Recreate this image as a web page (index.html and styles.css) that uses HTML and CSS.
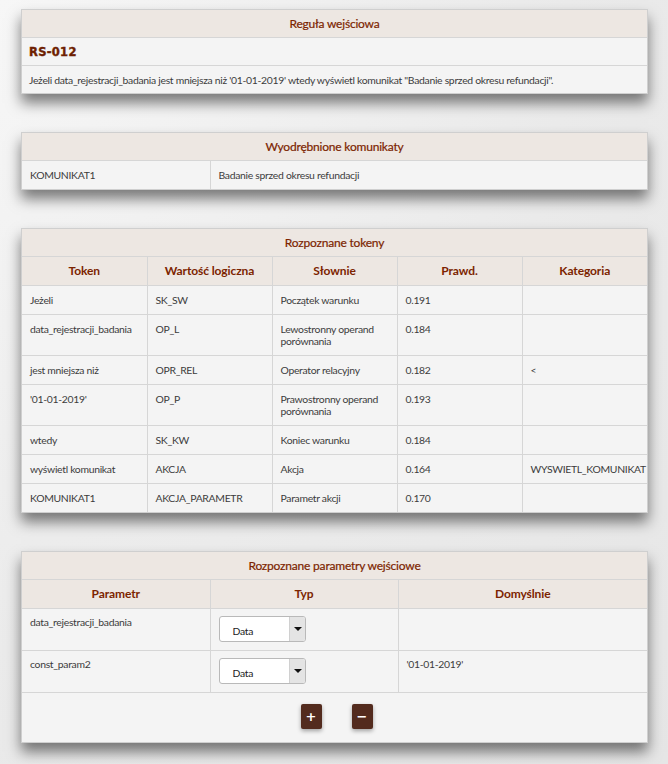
FILE: index.html
```html
<!DOCTYPE html>
<html lang="pl">
<head>
<meta charset="utf-8">
<title>Reguła wejściowa</title>
<link rel="stylesheet" href="styles.css">
</head>
<body>
<div class="page">
  <section class="panel">
    <table class="grid">
      <tr><th class="title">Reguła wejściowa</th></tr>
      <tr><td class="code">RS-012</td></tr>
      <tr><td class="rule">Jeżeli data_rejestracji_badania jest mniejsza niż '01-01-2019' wtedy wyświetl komunikat "Badanie sprzed okresu refundacji".</td></tr>
    </table>
  </section>

  <section class="panel">
    <table class="grid">
      <colgroup><col class="c188"><col></colgroup>
      <tr><th class="title" colspan="2">Wyodrębnione komunikaty</th></tr>
      <tr><td>KOMUNIKAT1</td><td>Badanie sprzed okresu refundacji</td></tr>
    </table>
  </section>

  <section class="panel">
    <table class="grid tokens">
      <colgroup><col><col><col><col><col></colgroup>
      <tr><th class="title" colspan="5">Rozpoznane tokeny</th></tr>
      <tr class="head"><th>Token</th><th>Wartość logiczna</th><th>Słownie</th><th>Prawd.</th><th>Kategoria</th></tr>
      <tr><td>Jeżeli</td><td>SK_SW</td><td>Początek warunku</td><td>0.191</td><td></td></tr>
      <tr><td>data_rejestracji_badania</td><td>OP_L</td><td>Lewostronny operand porównania</td><td>0.184</td><td></td></tr>
      <tr><td>jest mniejsza niż</td><td>OPR_REL</td><td>Operator relacyjny</td><td>0.182</td><td>&lt;</td></tr>
      <tr><td>'01-01-2019'</td><td>OP_P</td><td>Prawostronny operand porównania</td><td>0.193</td><td></td></tr>
      <tr><td>wtedy</td><td>SK_KW</td><td>Koniec warunku</td><td>0.184</td><td></td></tr>
      <tr><td>wyświetl komunikat</td><td>AKCJA</td><td>Akcja</td><td>0.164</td><td>WYSWIETL_KOMUNIKAT</td></tr>
      <tr><td>KOMUNIKAT1</td><td>AKCJA_PARAMETR</td><td>Parametr akcji</td><td>0.170</td><td></td></tr>
    </table>
  </section>

  <section class="panel">
    <table class="grid params">
      <colgroup><col class="c188"><col class="c188"><col></colgroup>
      <tr><th class="title" colspan="3">Rozpoznane parametry wejściowe</th></tr>
      <tr class="head"><th>Parametr</th><th>Typ</th><th>Domyślnie</th></tr>
      <tr>
        <td>data_rejestracji_badania</td>
        <td><div class="select"><span class="val">Data</span><span class="arrow"></span></div></td>
        <td></td>
      </tr>
      <tr>
        <td>const_param2</td>
        <td><div class="select"><span class="val">Data</span><span class="arrow"></span></div></td>
        <td>'01-01-2019'</td>
      </tr>
    </table>
    <div class="actions">
      <button class="btn" type="button">+</button>
      <button class="btn" type="button">−</button>
    </div>
  </section>
</div>
</body>
</html>
```

FILE: styles.css
```css
html, body {
  margin: 0;
  padding: 0;
}
body {
  background: radial-gradient(ellipse at 0% 0%, #f7f7f7 0%, #ebebeb 60%, #e6e6e6 100%);
  min-height: 764px;
  font-family: "Lato", "Liberation Sans", sans-serif;
  font-size: 10.4px;
  letter-spacing: -0.3px;
  color: #3c3c3c;
}
.page {
  padding: 9px 20px 20px 21px;
  display: flex;
  flex-direction: column;
  gap: 38px;
}
.panel {
  background: #f4f4f4;
  border: 1px solid #cfcfcf;
  box-shadow: 0 9px 13px rgba(0, 0, 0, 0.5);
}
.grid {
  width: 100%;
  border-collapse: collapse;
  table-layout: fixed;
}
.grid th, .grid td {
  border: 1px solid #d6d6d6;
  text-align: left;
  vertical-align: top;
  padding: 8px 8px 8px 8px;
  line-height: 12px;
}
.grid tr:first-child th { border-top: none; }
.grid th:first-child, .grid td:first-child { border-left: none; }
.grid th:last-child, .grid td:last-child { border-right: none; }
.grid tr:last-child td { border-bottom: none; }
.grid th.title {
  background: #ede7e2;
  color: #7c2400;
  font-weight: normal;
  font-size: 12px;
  letter-spacing: -0.2px;
  -webkit-text-stroke: 0.2px #7c2400;
  text-align: center;
  vertical-align: middle;
  height: 27px;
  padding: 0 8px;
}
.grid tr.head th {
  background: #ede7e2;
  color: #7c2400;
  font-weight: bold;
  font-size: 12px;
  letter-spacing: -0.1px;
  text-align: center;
  vertical-align: middle;
  height: 28px;
  padding: 0 8px;
}
.grid td.code {
  font-family: "DejaVu Sans", sans-serif;
  font-weight: 900;
  font-size: 11.5px;
  letter-spacing: 0.3px;
  -webkit-text-stroke: 0.4px #6e1f02;
  color: #6e1f02;
  vertical-align: middle;
  height: 27px;
  padding: 0 7px;
}
.grid td.rule {
  vertical-align: middle;
  height: 27px;
  padding: 0 7px;
}
.c188 { width: 188px; }
.tokens td { padding-right: 2px; }
.params td { padding-top: 7px; padding-bottom: 8px; }
.select {
  box-sizing: border-box;
  display: flex;
  width: 87px;
  height: 26px;
  background: #ffffff;
  border: 1px solid #b9b9b9;
  border-radius: 3px;
  overflow: hidden;
}
.select .val {
  flex: 1;
  padding: 8px 0 0 13px;
  color: #222;
}
.select .arrow {
  width: 15px;
  background: #e4e4e4;
  border-left: 1px solid #d0d0d0;
  position: relative;
}
.select .arrow::after {
  content: "";
  position: absolute;
  left: 4px;
  top: 10px;
  border-left: 4px solid transparent;
  border-right: 4px solid transparent;
  border-top: 4px solid #111;
}
.actions {
  border-top: 1px solid #d6d6d6;
  display: flex;
  justify-content: center;
  gap: 30px;
  padding: 11px 0 13px 4px;
}
.btn {
  width: 21px;
  height: 25px;
  padding: 0;
  border: none;
  border-radius: 2px;
  background: #532b1e;
  color: #ffffff;
  font-family: "DejaVu Sans", sans-serif;
  font-weight: bold;
  font-size: 13px;
  line-height: 25px;
  box-shadow: 0 2px 4px rgba(0, 0, 0, 0.35);
}
```
